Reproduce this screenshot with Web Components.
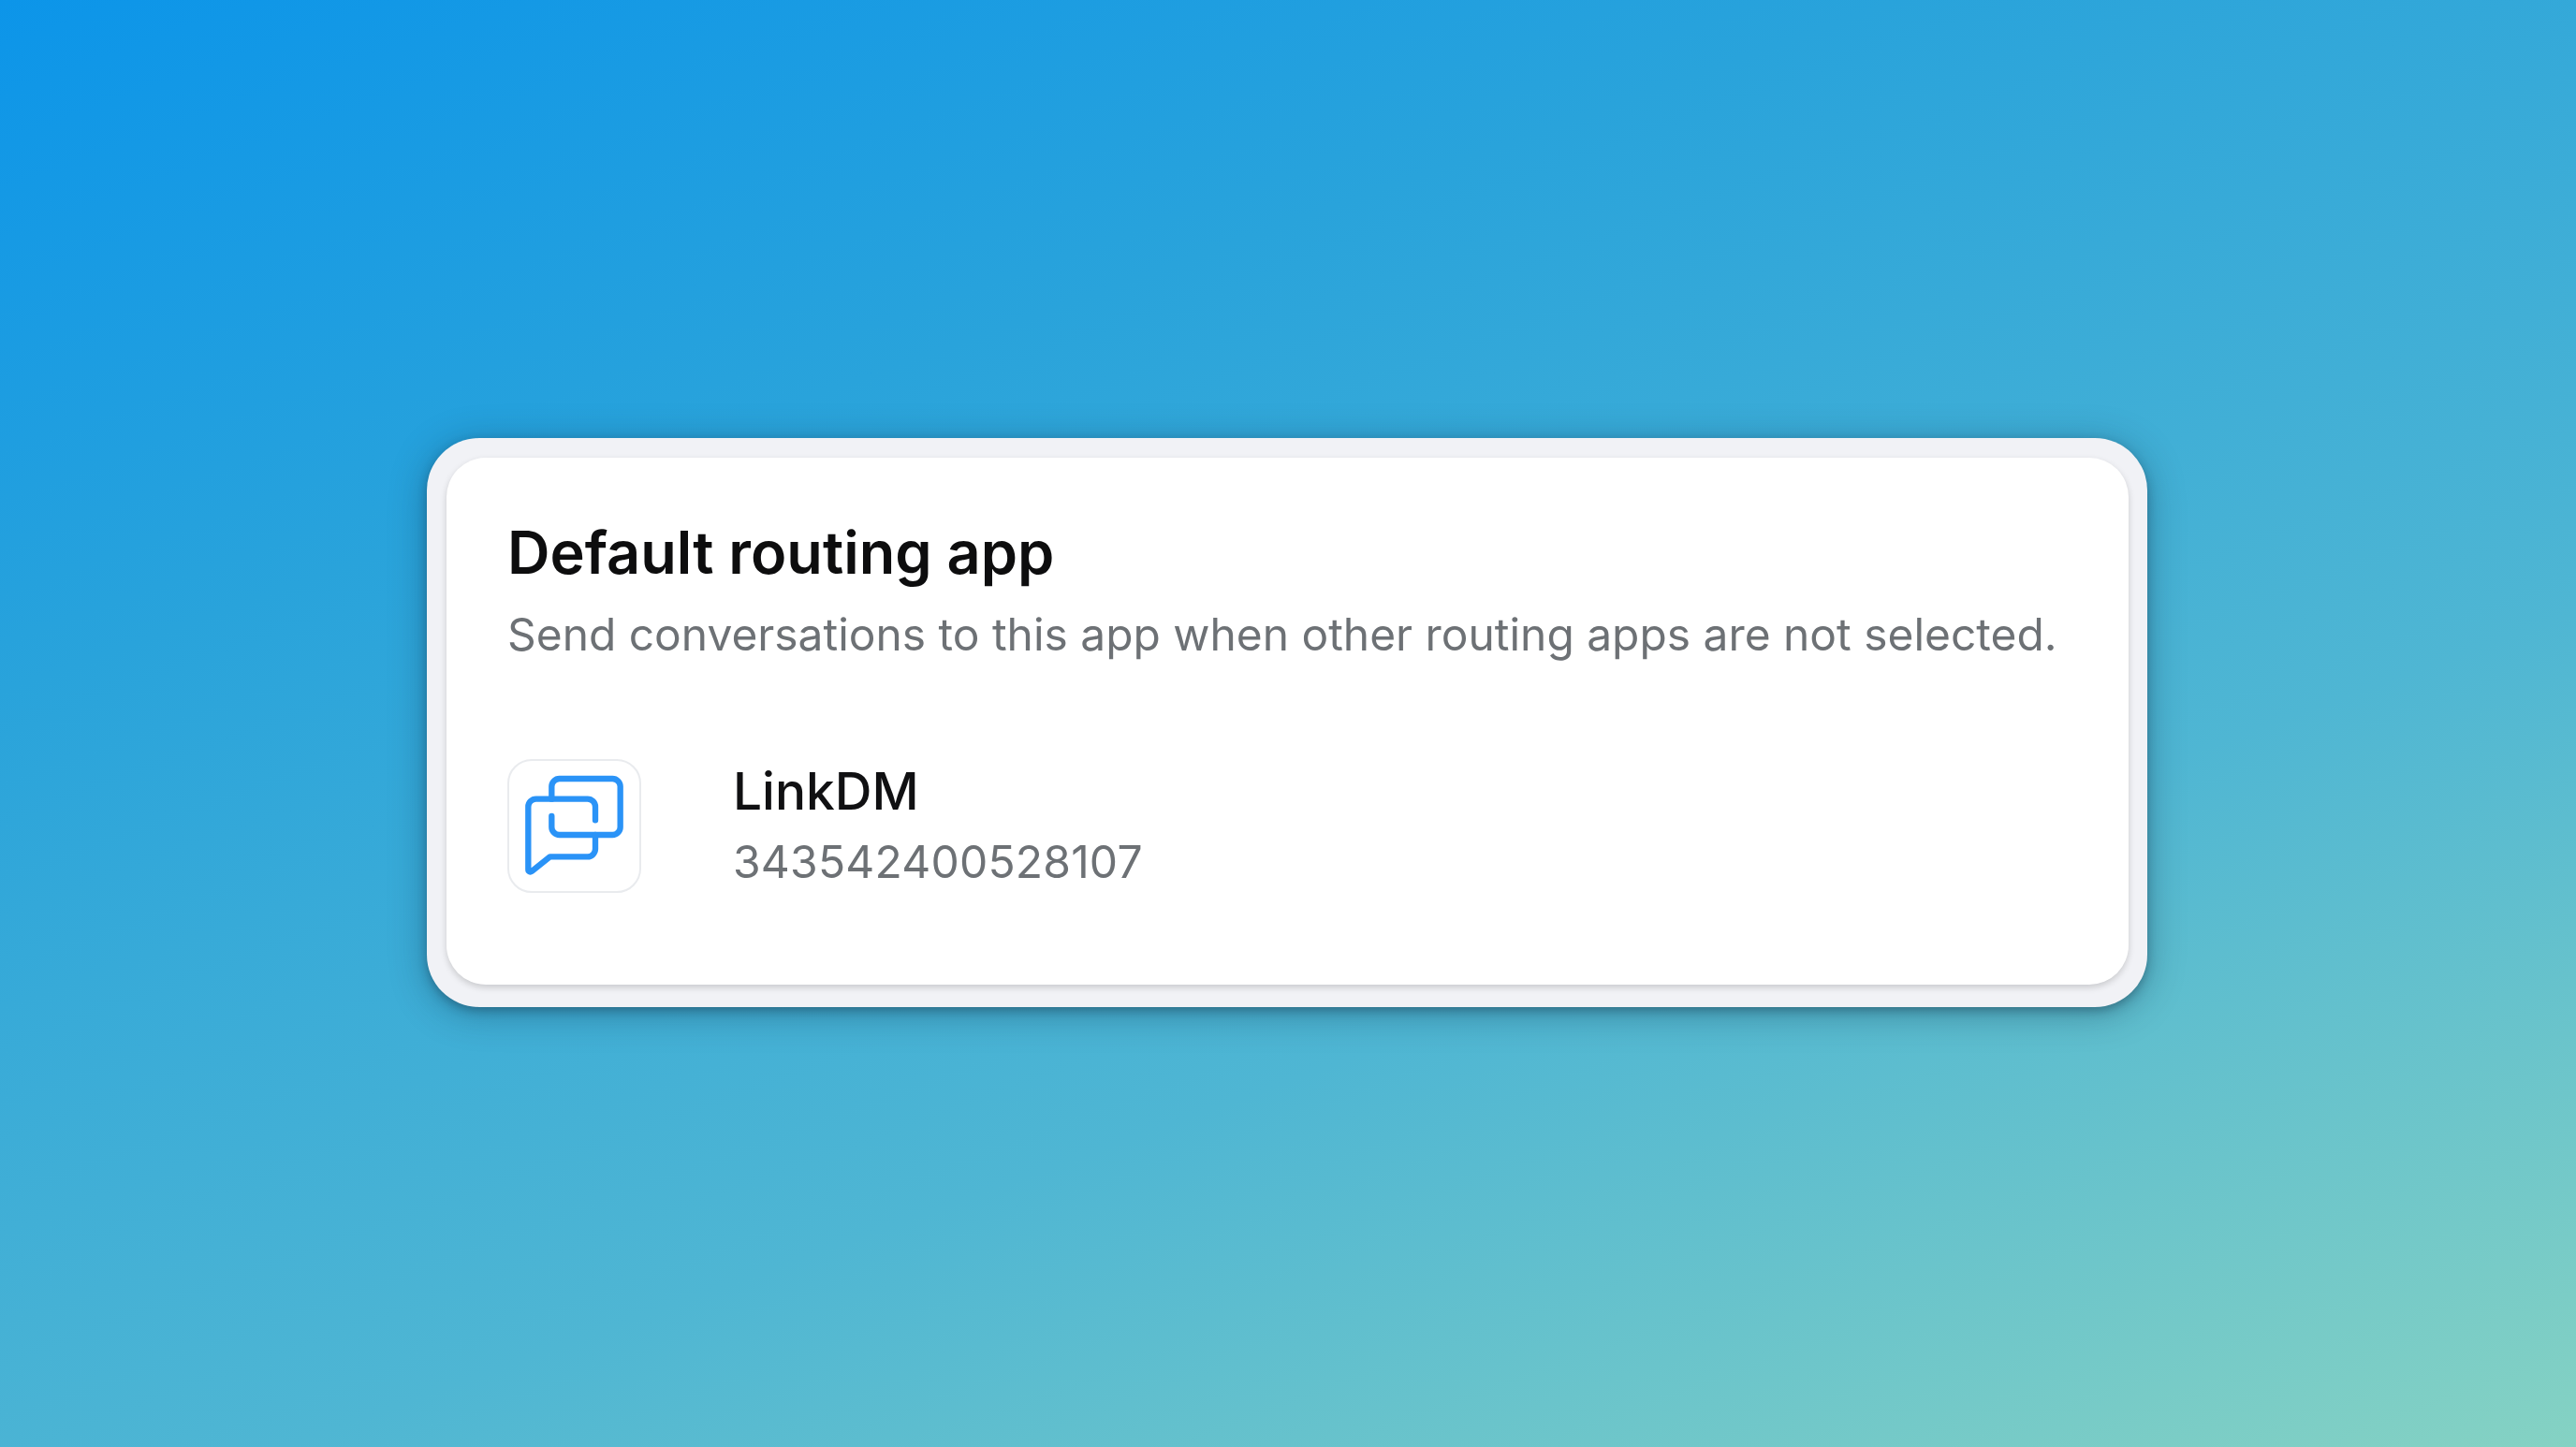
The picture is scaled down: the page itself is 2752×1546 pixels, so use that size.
<!DOCTYPE html>
<html lang="en"><head><meta charset="utf-8"><title>Default routing app</title>
<style>
html,body{margin:0;padding:0;height:100%}
body{font-family:Inter,"Liberation Sans",sans-serif}
</style></head><body>
<gradient-stage>
  <routing-card heading="Default routing app" description="Send conversations to this app when other routing apps are not selected.">
    <app-row name="LinkDM" appid="343542400528107"></app-row>
  </routing-card>
</gradient-stage>
<script>
class GradientStage extends HTMLElement{constructor(){super();this.attachShadow({mode:'open'}).innerHTML=`<style>
:host{display:flex;box-sizing:border-box;width:100%;height:1546px;padding:468px 458px 470px 456px;overflow:hidden;
background:linear-gradient(160deg,#0c95e9 0%,#29a3db 29%,#4fb6d3 65%,#85d2c3 100%)}
</style><slot></slot>`}}
class RoutingCard extends HTMLElement{constructor(){super();this.attachShadow({mode:'open'}).innerHTML=`<style>
:host{display:flex;flex:1;box-sizing:border-box;padding:21px 20px 24px 21px;background:#f1f2f6;border-radius:56px;
box-shadow:0 4px 10px rgba(20,50,70,.34),0 6px 38px rgba(15,50,70,.38)}
.inner{flex:1;display:flex;flex-direction:column;box-sizing:border-box;background:#fff;border-radius:42px;padding:66px 65px 0;
box-shadow:0 3px 7px rgba(0,0,0,.17)}
.blur{filter:blur(.6px)}
h2{margin:0;font:600 63px/70px Inter,"Liberation Sans",sans-serif;color:#0d0d0e}
p{margin:26px 0 0;font:400 47.9px/54px Inter,"Liberation Sans",sans-serif;color:#6d7175;white-space:nowrap}
.row{margin-top:106px}
</style><div class="inner"><div class="blur"><h2></h2><p></p><div class="row"><slot></slot></div></div></div>`;
this.shadowRoot.querySelector('h2').textContent=this.getAttribute('heading');
this.shadowRoot.querySelector('p').textContent=this.getAttribute('description');}}
class AppRow extends HTMLElement{constructor(){super();this.attachShadow({mode:'open'}).innerHTML=`<style>
:host{display:flex;align-items:center;gap:98px}
.text{display:flex;flex-direction:column;margin-top:-4px}
.name{font:500 55px/62px Inter,"Liberation Sans",sans-serif;color:#101012}
.id{margin-top:18px;font:400 48px/54px Inter,"Liberation Sans",sans-serif;letter-spacing:.2px;color:#6d7175}
</style><app-icon></app-icon><div class="text"><span class="name"></span><span class="id"></span></div>`;
this.shadowRoot.querySelector('.name').textContent=this.getAttribute('name');
this.shadowRoot.querySelector('.id').textContent=this.getAttribute('appid');}}
class AppIcon extends HTMLElement{constructor(){super();this.attachShadow({mode:'open'}).innerHTML=`<style>
:host{display:block;flex:none;width:143px;height:143px;box-sizing:border-box;background:#fff;border:2px solid #e9ebee;border-radius:26px}
svg{display:block;width:139px;height:139px}
</style><svg viewBox="74 68 417 417" fill="none" stroke="#2a93f7" stroke-width="19" stroke-linecap="round" stroke-linejoin="round">
<path d="M210 190V150a25 25 0 0 1 25-25H405a25 25 0 0 1 25 25V280a25 25 0 0 1-25 25H235a25 25 0 0 1-25-25V245"/>
<path d="M350 258V215a25 25 0 0 0-25-25H160a25 25 0 0 0-25 25V416a7 7 0 0 0 11 6L205 375H325a25 25 0 0 0 25-25V305"/>
</svg>`}}
customElements.define('gradient-stage',GradientStage);
customElements.define('routing-card',RoutingCard);
customElements.define('app-row',AppRow);
customElements.define('app-icon',AppIcon);
</script></body></html>
